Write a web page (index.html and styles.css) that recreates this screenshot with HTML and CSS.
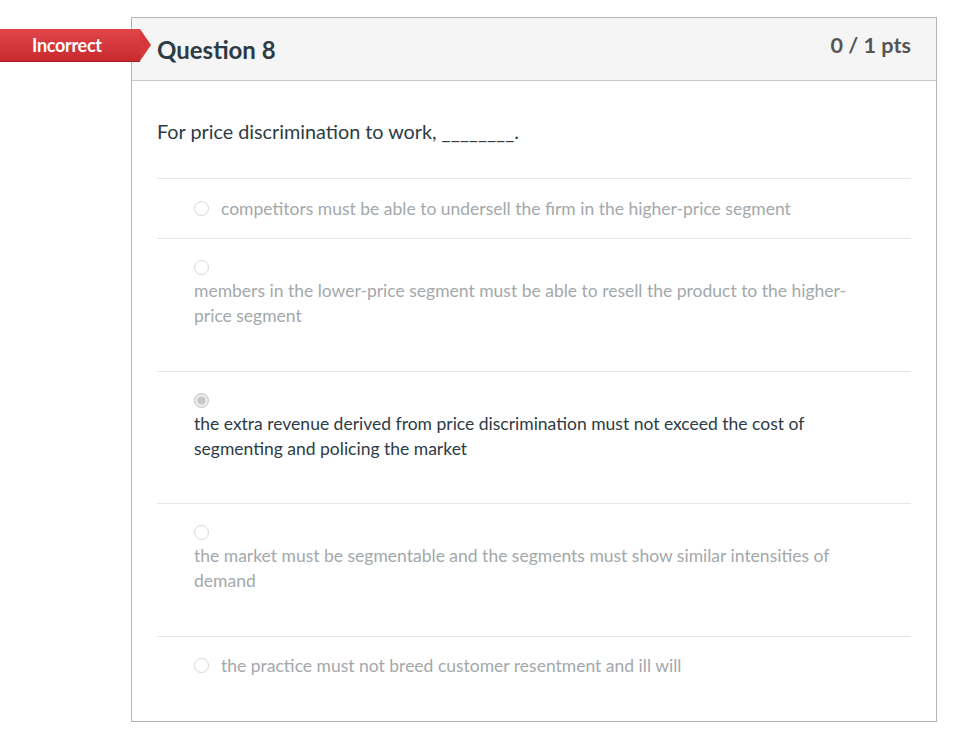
FILE: index.html
```html
<!DOCTYPE html>
<html>
<head>
<meta charset="utf-8">
<link rel="stylesheet" href="styles.css">
</head>
<body>
<div class="question">
  <div class="badge">Incorrect</div>
  <div class="header">
    <h2 class="title">Question 8</h2>
    <div class="pts">0 / 1 pts</div>
  </div>
  <div class="body">
    <p class="qtext">For price discrimination to work, ________.</p>
    <div class="answers">
      <div class="answer inline">
        <span class="radio"></span><span class="atext">competitors must be able to undersell the firm in the higher-price segment</span>
      </div>
      <div class="answer stacked">
        <div class="radio-line"><span class="radio"></span></div>
        <div class="atext">members in the lower-price segment must be able to resell the product to the higher-<br>price segment</div>
      </div>
      <div class="answer stacked selected">
        <div class="radio-line"><span class="radio checked"></span></div>
        <div class="atext">the extra revenue derived from price discrimination must not exceed the cost of<br>segmenting and policing the market</div>
      </div>
      <div class="answer stacked">
        <div class="radio-line"><span class="radio"></span></div>
        <div class="atext">the market must be segmentable and the segments must show similar intensities of<br>demand</div>
      </div>
      <div class="answer inline last">
        <span class="radio"></span><span class="atext">the practice must not breed customer resentment and ill will</span>
      </div>
    </div>
  </div>
</div>
</body>
</html>
```

FILE: styles.css
```css
html, body {
  margin: 0;
  padding: 0;
  background: #fff;
}
body {
  font-family: Lato, "Open Sans", "Liberation Sans", sans-serif;
  color: #2d3b45;
}
.question {
  position: relative;
  margin: 17px 0 0 131px;
  width: 804px;
  height: 703px;
  border: 1px solid #b4b4b4;
}
.badge {
  position: absolute;
  left: -132px;
  top: 11px;
  width: 140px;
  height: 33px;
  box-sizing: border-box;
  padding-left: 32px;
  line-height: 32px;
  color: #fff;
  font-weight: 700;
  font-size: 18px;
  letter-spacing: -0.3px;
  background: linear-gradient(#e2464a, #c82a2e);
  border-bottom: 1px solid #a51f22;
}
.badge::after {
  content: "";
  position: absolute;
  right: -11px;
  top: 0;
  width: 0;
  height: 0;
  border-top: 16.5px solid transparent;
  border-bottom: 16.5px solid transparent;
  border-left: 11px solid #d5373b;
}
.header {
  display: flex;
  justify-content: space-between;
  align-items: flex-start;
  height: 62px;
  background: #f5f5f5;
  border-bottom: 1px solid #c6c9cb;
  padding: 0 25px;
}
.title {
  margin: 0;
  padding-top: 17px;
  font-size: 24px;
  font-weight: 700;
  line-height: 30px;
  color: #2d3b45;
}
.pts {
  padding-top: 13px;
  font-size: 21.6px;
  font-weight: 700;
  line-height: 28px;
  color: #555;
}
.body {
  padding: 37px 25px 0;
}
.qtext {
  margin: 0 0 33px;
  font-size: 19.8px;
  line-height: 27px;
}
.answers {
  display: flex;
  flex-direction: column;
}
.answer {
  border-top: 1px solid #e6e6e6;
  padding: 17px 0 17px 37px;
  font-size: 17.5px;
  line-height: 25px;
  color: #a3a8ab;
}
.answer.stacked {
  padding-bottom: 43px;
}
.answer.stacked.selected {
  padding-bottom: 42px;
}
.answer.selected {
  color: #2d3b45;
}
.answer.inline {
  display: flex;
  align-items: center;
}
.answer.inline .radio {
  margin-right: 12px;
}
.answer.last {
  padding-top: 16px;
}
.radio-line {
  height: 22px;
  display: flex;
  align-items: center;
}
.radio {
  display: inline-block;
  box-sizing: border-box;
  width: 15px;
  height: 15px;
  border-radius: 50%;
  border: 1px solid #d8d8d8;
  background: #fff;
  flex: none;
}
.radio.checked {
  border: 1px solid #c2c2c2;
  background: radial-gradient(circle, #c8c8c8 0 3.6px, #ececec 4.4px);
}
```
